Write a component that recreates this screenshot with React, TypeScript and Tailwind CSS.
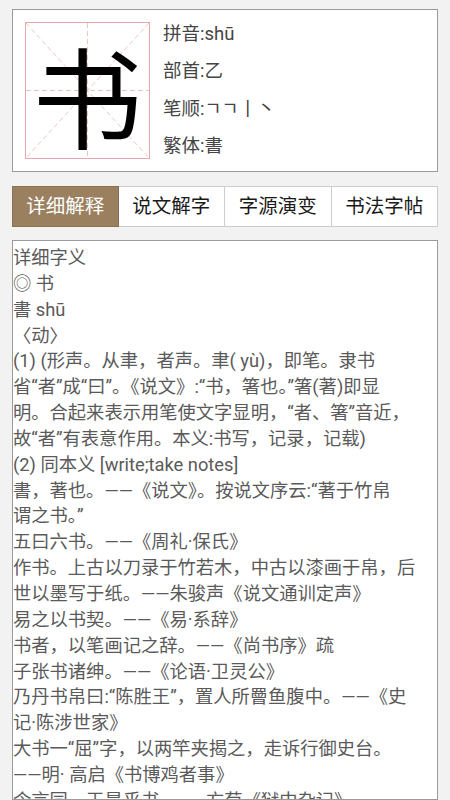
import React from 'react';

const FONT = '"Roboto", "Noto Sans CJK SC", sans-serif';

const tabs = ['详细解释', '说文解字', '字源演变', '书法字帖'];

const info = [
  ['拼音', 'shū'],
  ['部首', '乙'],
  ['笔顺', 'ㄱㄱ丨丶'],
  ['繁体', '書'],
];

const lines = [
  '详细字义',
  '◎ 书',
  '書 shū',
  '〈动〉',
  '(1) (形声。从聿，者声。聿( yù)，即笔。隶书',
  '省“者”成“曰”。《说文》:“书，箸也。”箸(著)即显',
  '明。合起来表示用笔使文字显明，“者、箸”音近，',
  '故“者”有表意作用。本义:书写，记录，记载)',
  '(2) 同本义 [write;take notes]',
  '書，著也。——《说文》。按说文序云:“著于竹帛',
  '谓之书。”',
  '五曰六书。——《周礼·保氏》',
  '作书。上古以刀录于竹若木，中古以漆画于帛，后',
  '世以墨写于纸。——朱骏声《说文通训定声》',
  '易之以书契。——《易·系辞》',
  '书者，以笔画记之辞。——《尚书序》疏',
  '子张书诸绅。——《论语·卫灵公》',
  '乃丹书帛曰:“陈胜王”，置人所罾鱼腹中。——《史',
  '记·陈涉世家》',
  '大书一“屈”字，以两竿夹揭之，走诉行御史台。',
  '——明· 高启《书博鸡者事》',
  '令言同，王是乎书。——方苞《狱中杂记》',
];

function CharBox() {
  return (
    <div className="relative w-[125px] h-[137px] shrink-0">
      <svg className="absolute inset-0" width="125" height="137" viewBox="0 0 125 137">
        <rect x="0.5" y="0.5" width="124" height="136" fill="none" stroke="#e6a9a9" strokeWidth="1" />
        <g stroke="#f0c4c4" strokeWidth="1" strokeDasharray="5 3" fill="none">
          <line x1="62.5" y1="1" x2="62.5" y2="136" />
          <line x1="1" y1="68.5" x2="124" y2="68.5" />
          <line x1="1" y1="1" x2="124" y2="136" />
          <line x1="124" y1="1" x2="1" y2="136" />
        </g>
      </svg>
      <div
        className="absolute inset-0 flex items-center justify-center text-[110px] leading-none text-black pt-[4px]"
        style={{ fontFamily: '"Noto Sans CJK SC", sans-serif' }}
      >
        书
      </div>
    </div>
  );
}

export default function App() {
  return (
    <div className="h-[800px] bg-[#f2f2f2] flex flex-col overflow-hidden" style={{ fontFamily: FONT }}>
      <div className="mt-[9px] mx-[12px] h-[163px] border border-[#9a9a9a] bg-white flex items-center px-[12px] shrink-0">
        <CharBox />
        <div className="ml-[13px] flex flex-col text-[18.5px] text-[#444]">
          {info.map(([k, v]) => (
            <div key={k} className="h-[37.3px] leading-[37.3px] whitespace-nowrap">
              {k}:{v}
            </div>
          ))}
        </div>
      </div>

      <div className="mt-[14px] mx-[12px] h-[41px] grid grid-cols-4 shrink-0">
        {tabs.map((t, i) => (
          <div
            key={t}
            className={
              i === 0
                ? 'flex items-center justify-center bg-[#9a805f] text-white text-[19.5px] border border-[#8a7152]'
                : 'flex items-center justify-center bg-white text-[#1a1a1a] text-[19.5px] border border-[#cdcdcd] border-l-0'
            }
          >
            {t}
          </div>
        ))}
      </div>

      <div className="mt-[13px] mx-[12px] flex-1 min-h-0 border border-[#9a9a9a] bg-white overflow-hidden pt-[4px] text-[18.3px] leading-[25.85px] text-[#5a5a5a]">
        {lines.map((l, i) => (
          <div key={i} className="whitespace-nowrap">
            {l}
          </div>
        ))}
      </div>
    </div>
  );
}
